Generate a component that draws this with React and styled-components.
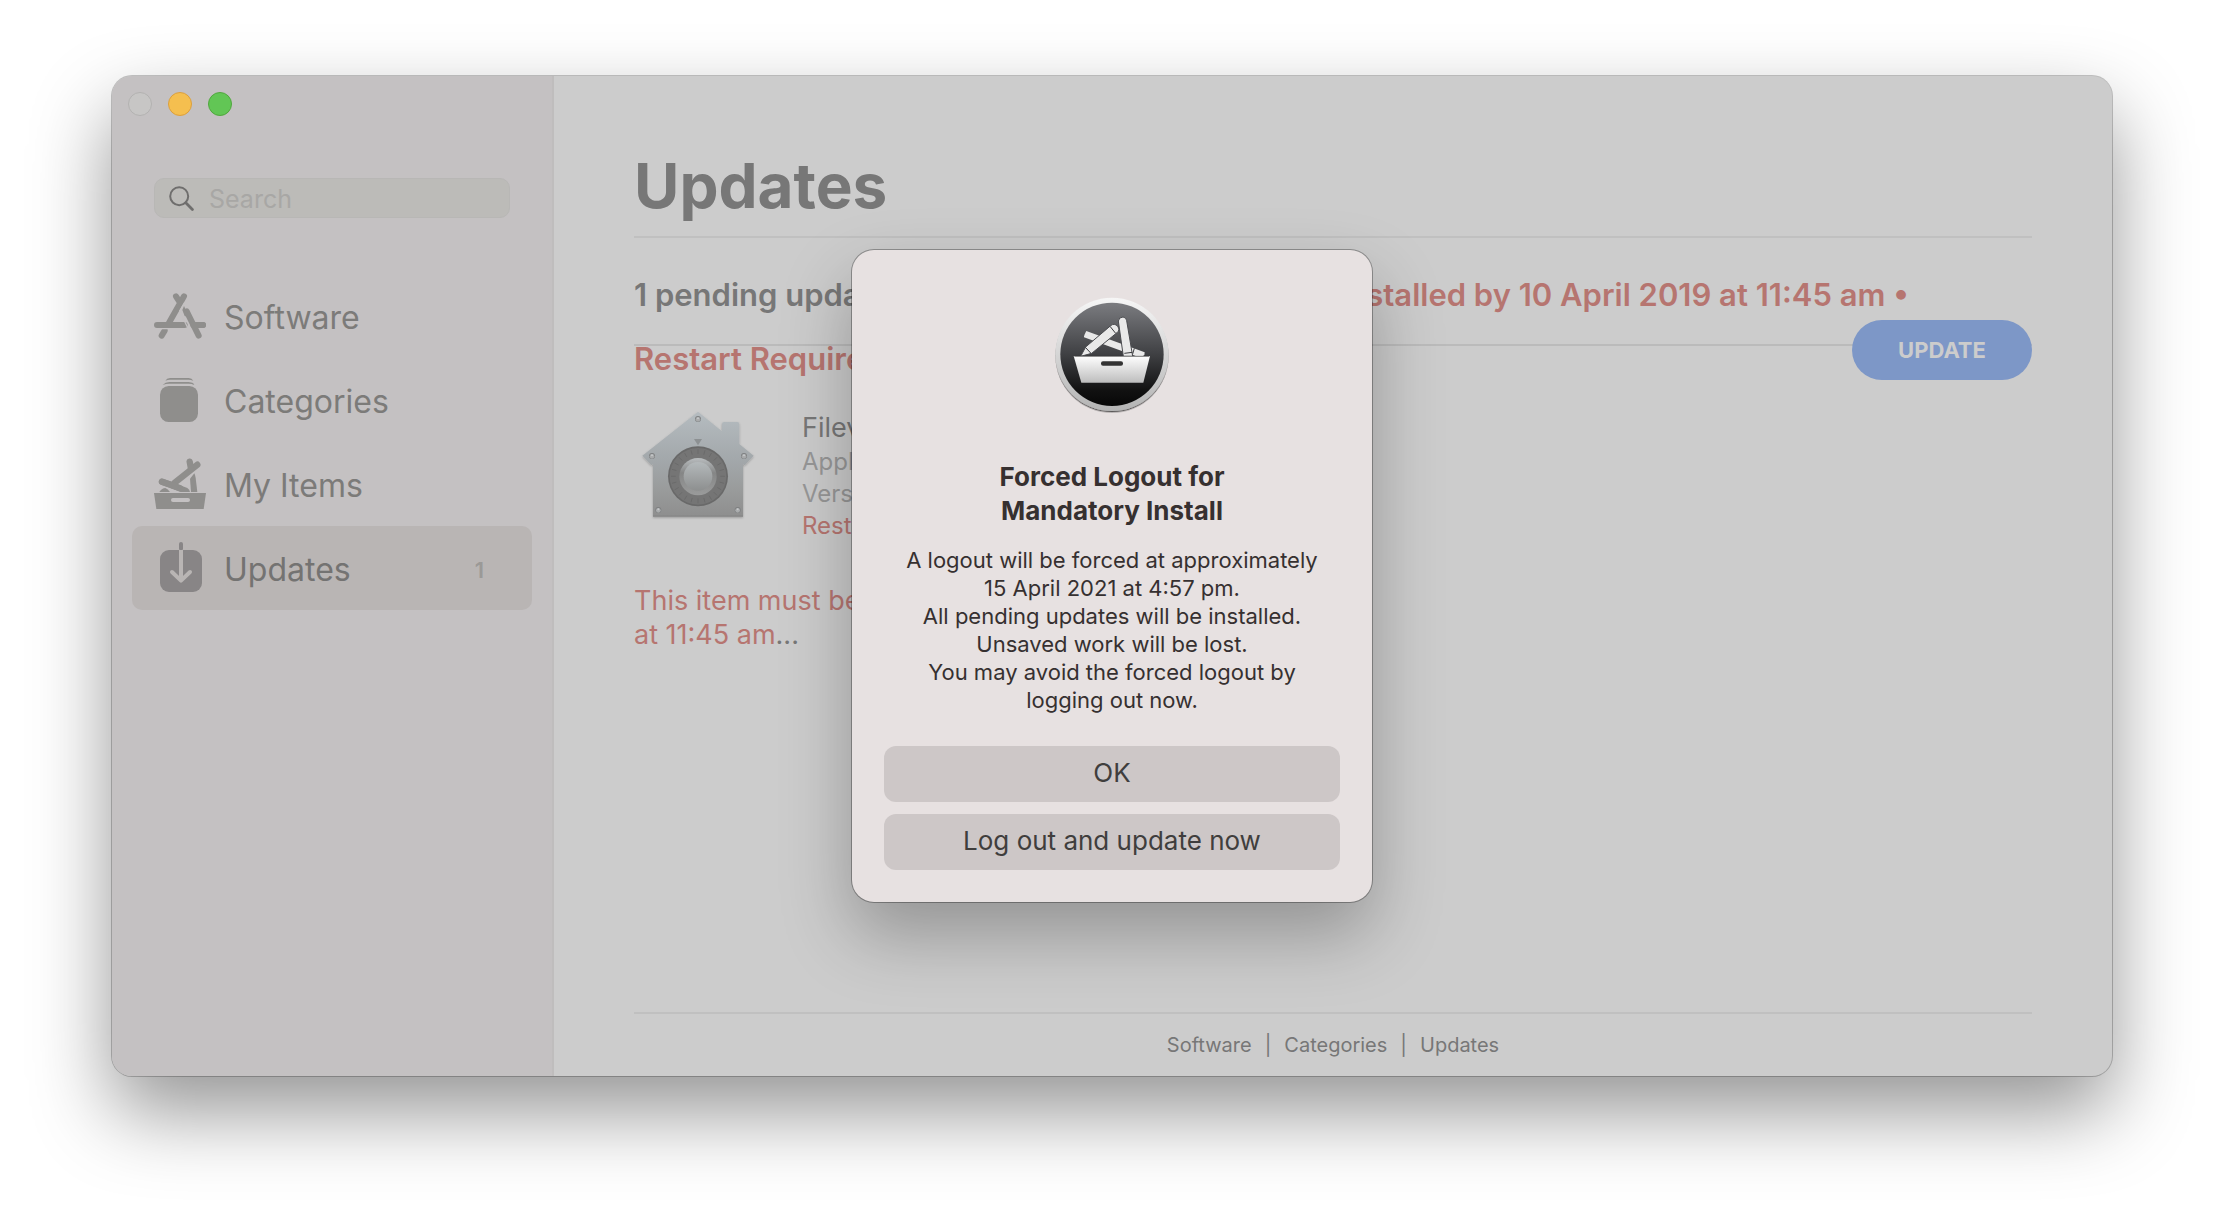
import React from "react";
import styled, { createGlobalStyle } from "styled-components";

const GlobalStyle = createGlobalStyle`
  *, *::before, *::after { box-sizing: border-box; }
  body {
    margin: 0;
    background: #fff;
    color: #777;
    font-family: Inter, "Liberation Sans", sans-serif;
  }
  h1, h2, h3, p, ul { margin: 0; padding: 0; }
  ul { list-style: none; }
  a { color: inherit; text-decoration: none; }
  button, input { font-family: inherit; }
`;

const Desktop = styled.div`
  min-height: 100vh;
  padding: 76px 112px 148px;
  display: flex;
`;

const AppWindow = styled.div`
  position: relative;
  flex: 1;
  display: flex;
  border-radius: 20px;
  background: #ccc;
  box-shadow: 0 0 0 1px rgba(0, 0, 0, 0.22), 0 36px 80px rgba(0, 0, 0, 0.42);
`;

const Sidebar = styled.aside`
  flex: none;
  width: 442px;
  padding: 16px 20px;
  border-right: 2px solid #bfbdbd;
  border-radius: 20px 0 0 20px;
  background: #c4c1c2;
`;

const Lights = styled.div`
  display: flex;
  gap: 16px;
  margin-left: -4px;
`;

const Light = styled.button`
  width: 24px;
  height: 24px;
  padding: 0;
  border: 1px solid ${(p) => p.$edge};
  border-radius: 50%;
  background: ${(p) => p.$fill};
`;

const SearchBox = styled.label`
  display: flex;
  align-items: center;
  gap: 15px;
  height: 40px;
  margin: 62px 22px 56px;
  padding: 0 14px;
  border: 1px solid #b8b7b5;
  border-radius: 10px;
  background: #bcbbb8;
`;

const SearchInput = styled.input`
  flex: 1;
  min-width: 0;
  padding: 2px 0 0;
  border: 0;
  outline: 0;
  background: none;
  color: #777;
  font-size: 25px;
  line-height: 32px;
  &::placeholder { color: #a8a7a5; opacity: 1; }
`;

const NavLink = styled.a`
  display: flex;
  align-items: center;
  gap: 18px;
  height: 84px;
  padding: 0 48px 0 22px;
  border-radius: 10px;
  background: ${(p) => (p.$active ? "#b9b5b4" : "transparent")};
  color: ${(p) => (p.$active ? "#747372" : "#7c7b79")};
  font-size: 32px;
  line-height: 40px;
`;

const NavLabel = styled.span`
  flex: 1;
  padding-top: 3px;
`;

const Count = styled.span`
  padding-top: 3px;
  color: #9b9997;
  font-size: 22px;
  font-weight: 600;
`;

const Main = styled.main`
  flex: 1;
  min-width: 0;
  display: flex;
  flex-direction: column;
  padding: 72px 80px 0;
`;

const PageTitle = styled.h1`
  padding-bottom: 12px;
  border-bottom: 2px solid #c0c0c0;
  font-size: 62px;
  font-weight: 700;
  line-height: 76px;
`;

const Banner = styled.section`
  position: relative;
  height: 108px;
  padding: 25px 80px 0 0;
  border-bottom: 2px solid #bbb;
`;

const BannerText = styled.h2`
  font-size: 31px;
  font-weight: 600;
  line-height: 64px;
`;

const Warning = styled.span`
  color: #b67570;
`;

const Unbroken = styled.span`
  white-space: nowrap;
`;

const UpdateButton = styled.button`
  position: absolute;
  top: 82px;
  right: 0;
  width: 180px;
  height: 60px;
  border: 0;
  border-radius: 30px;
  background: #7d97c7;
  color: #ccc;
  font-size: 22px;
  font-weight: 700;
`;

const Items = styled.ul`
  padding-top: 53px;
`;

const Item = styled.li`
  max-width: 640px;
`;

const ItemHead = styled.div`
  display: flex;
  gap: 40px;
`;

const ItemFacts = styled.div`
  padding-top: 11px;
  font-size: 24px;
  line-height: 32px;
  color: #979797;
`;

const ItemName = styled.h3`
  color: #777;
  font-size: 27px;
  font-weight: 400;
  line-height: 36px;
`;

const ItemNote = styled.p`
  margin-top: 42px;
  font-size: 27px;
  line-height: 34px;
`;

const Footer = styled.footer`
  display: flex;
  justify-content: center;
  gap: 13px;
  margin-top: auto;
  padding: 16px 0;
  border-top: 2px solid #c0c0c0;
  font-size: 20px;
  line-height: 30px;
`;

const Overlay = styled.div`
  position: absolute;
  inset: 0;
  display: grid;
  place-items: center;
`;

const Dialog = styled.div`
  width: 520px;
  padding: 45px 32px 32px;
  border-radius: 22px;
  background: #e7e1e1;
  color: #363030;
  text-align: center;
  box-shadow: 0 0 0 1px rgba(0, 0, 0, 0.3), 0 32px 70px rgba(0, 0, 0, 0.28);
`;

const DialogTitle = styled.h2`
  margin: 45px 0 18px;
  font-size: 26px;
  font-weight: 700;
  line-height: 34px;
`;

const DialogBody = styled.div`
  padding: 0 14px;
  font-size: 22px;
  line-height: 28px;
`;

const DialogActions = styled.div`
  display: grid;
  gap: 12px;
  margin-top: 32px;
`;

const DialogButton = styled.button`
  height: 56px;
  padding: 0 0 3px;
  border: 0;
  border-radius: 12px;
  background: #cdc7c7;
  color: #403e3d;
  font-size: 26px;
`;

const Block = styled.svg`
  display: block;
  flex: none;
  margin: ${(p) => (p.$centered ? "0 auto" : "0")};
`;

const SearchIcon = () => (
  <Block width="25" height="25" viewBox="0 0 25 25" fill="none" stroke="#6f6e6d" aria-hidden="true">
    <circle cx="10.2" cy="10.2" r="9" strokeWidth="2" />
    <path d="M16.8 16.8 L23.4 23.4" strokeWidth="2.8" strokeLinecap="round" />
  </Block>
);

const SoftwareIcon = () => (
  <Block width="52" height="52" viewBox="42 30 156 156" fill="none" stroke="#8f8e8c" strokeWidth="18" strokeLinecap="round" aria-hidden="true">
    <path d="M51 135H134M160 135H189M108 49L120 68M132 49L87 128" />
    <path d="M74 152L65 167" />
    <path d="M56 149L64 146H84" stroke="#c4c1c2" strokeWidth="4" />
    <path d="M133 84L175 166" stroke="#c4c1c2" strokeWidth="24" strokeLinecap="butt" />
    <path d="M140 94L176 167" />
    <path d="M160 135H189" />
    <path d="M132 78L127 90L134 108L148 112Z" fill="#8f8e8c" stroke="none" />
    <path d="M133 69L119 93L142 141" stroke="#c4c1c2" strokeWidth="4" />
  </Block>
);

const CategoriesIcon = () => (
  <Block width="52" height="52" viewBox="42 282 156 156" fill="#8f8e8c" aria-hidden="true">
    <rect x="60" y="318" width="114" height="108" rx="26" />
    <path d="M68 315Q76 306 88 306H146Q158 306 166 315Q156 311 146 311H88Q78 311 68 315Z" />
    <path d="M76 302Q80 294 90 294H146Q156 294 160 302Q152 299 146 299H90Q84 299 76 302Z" />
  </Block>
);

const MyItemsIcon = () => (
  <Block width="52" height="52" viewBox="42 534 156 156" fill="#8f8e8c" aria-hidden="true">
    <path d="M42 639H198L191 687H49Z" />
    <rect x="93" y="654" width="57" height="12" rx="6" fill="#c4c1c2" />
    <path d="M58 636Q66 624 76 624Q82 626 90 636Z" />
    <path d="M150 596L163 580Q166 586 167 594L172 636H153Z" />
    <path d="M66 605L120 625" stroke="#8f8e8c" strokeWidth="19" strokeLinecap="round" />
    <path d="M110 612L142 624Q149 628 150 636H122L92 624Z" />
    <path d="M172 554L112 602" stroke="#c4c1c2" strokeWidth="25" />
    <path d="M172 554L104 608" stroke="#8f8e8c" strokeWidth="19" strokeLinecap="round" />
    <path d="M149 545L153 566" stroke="#8f8e8c" strokeWidth="19" strokeLinecap="round" />
    <path d="M66 605L106 619" stroke="#8f8e8c" strokeWidth="19" strokeLinecap="round" />
  </Block>
);

const UpdatesIcon = () => (
  <Block width="52" height="52" viewBox="102 486 156 156" fill="none" strokeWidth="12" strokeLinecap="round" strokeLinejoin="round" aria-hidden="true">
    <rect x="120" y="510" width="126" height="126" rx="27" fill="#888586" />
    <path d="M183 492V506" stroke="#888586" />
    <path d="M183 510V600" stroke="#b9b5b4" strokeLinecap="butt" />
    <path d="M156 576L183 602L210 576" stroke="#b9b5b4" />
  </Block>
);

const RIVETS = [[234, 87], [96, 198], [372, 198], [115, 360], [353, 360]];
const TICKS = Array.from({ length: 24 }, (_, i) => i * 15);

const HouseIcon = () => (
  <Block width="128" height="128" viewBox="42 27 384 384" aria-hidden="true">
    <defs>
      <linearGradient id="wall" x1="0" y1="0" x2="0" y2="1">
        <stop offset="0" stopColor="#b5bcc0" />
        <stop offset="0.45" stopColor="#a3a8ab" />
        <stop offset="0.75" stopColor="#999b9b" />
        <stop offset="1" stopColor="#8e8e8e" />
      </linearGradient>
      <linearGradient id="knob" x1="0" y1="0" x2="0" y2="1">
        <stop offset="0" stopColor="#b4b9bb" />
        <stop offset="1" stopColor="#8d8f8f" />
      </linearGradient>
      <linearGradient id="rim" x1="0" y1="0" x2="0" y2="1">
        <stop offset="0" stopColor="#b9bdbf" />
        <stop offset="0.4" stopColor="#858686" />
        <stop offset="1" stopColor="#9a9b9b" />
      </linearGradient>
      <filter id="drop" x="-10%" y="-10%" width="120%" height="120%">
        <feDropShadow dx="0" dy="3" stdDeviation="3" floodColor="#000" floodOpacity="0.25" />
      </filter>
    </defs>
    <path d="M234 65L306 124V102Q306 96 312 96H352Q358 96 358 102V162L401 197L374 226L369 223V380H99V223L94 226L67 197Z" fill="url(#wall)" filter="url(#drop)" />
    <path d="M99 378H369" stroke="#858585" strokeWidth="3" />
    <path d="M222 147H246L234 166Z" fill="#8c9092" />
    <circle cx="234" cy="259" r="90" fill="#696969" />
    <circle cx="234" cy="259" r="85" fill="#757575" />
    {TICKS.map((a) => (
      <path key={a} d="M234 178V192" stroke="#666" strokeWidth="2" transform={`rotate(${a} 234 259)`} />
    ))}
    <circle cx="234" cy="260" r="56" fill="url(#rim)" />
    <circle cx="234" cy="259" r="43" fill="url(#knob)" />
    {RIVETS.map(([x, y]) => (
      <g key={`${x}-${y}`}>
        <circle cx={x} cy={y} r="9" fill="#7d7f80" />
        <circle cx={x} cy={y + 1} r="7" fill="#a9abac" />
        <circle cx={x} cy={y - 2} r="3" fill="#c6c8c9" />
      </g>
    ))}
  </Block>
);

const CenterIcon = () => (
  <Block $centered width="120" height="120" viewBox="67 44 360 360" aria-hidden="true">
    <defs>
      <linearGradient id="ring" x1="0" y1="0" x2="0" y2="1">
        <stop offset="0" stopColor="#f6f6f6" />
        <stop offset="1" stopColor="#b4b4b4" />
      </linearGradient>
      <linearGradient id="disc" x1="0" y1="0" x2="0" y2="1">
        <stop offset="0" stopColor="#7b7c80" />
        <stop offset="0.5" stopColor="#3f4043" />
        <stop offset="0.85" stopColor="#111" />
        <stop offset="1" stopColor="#070707" />
      </linearGradient>
      <linearGradient id="tray" x1="0" y1="0" x2="0" y2="1">
        <stop offset="0" stopColor="#fff" />
        <stop offset="1" stopColor="#bdbdbd" />
      </linearGradient>
      <filter id="lift" x="-10%" y="-10%" width="120%" height="120%">
        <feDropShadow dx="0" dy="4" stdDeviation="2" floodColor="#000" floodOpacity="0.6" />
      </filter>
    </defs>
    <circle cx="247" cy="222" r="170" fill="url(#ring)" filter="url(#lift)" />
    <circle cx="247" cy="222" r="155" fill="url(#disc)" />
    <g fill="#e9e9e9">
      <path d="M170 152L345 216Q346 224 340 227H318L163 171Q162 167 170 152Z" />
      <path d="M314 204L308 224" stroke="#3a3b3e" strokeWidth="3" />
      <path d="M153 228L168 200L243 136Q254 127 264 138Q272 149 262 157L186 219Z" stroke="#4b4c50" strokeWidth="3" />
      <path d="M168 202L184 219M241 138L258 159" stroke="#3a3b3e" strokeWidth="3" />
      <path d="M266 122Q268 110 280 110Q290 111 291 121L309 228H281Z" stroke="#4b4c50" strokeWidth="3" />
      <path d="M284 219L308 216" stroke="#3a3b3e" strokeWidth="3" />
    </g>
    <path d="M132 227H361L341 307H155Z" fill="url(#tray)" />
    <path d="M134 228H359" stroke="#333" strokeWidth="2" />
    <rect x="214" y="243" width="66" height="13" rx="6" fill="#333" />
  </Block>
);

const NAV = [
  { label: "Software", Icon: SoftwareIcon },
  { label: "Categories", Icon: CategoriesIcon },
  { label: "My Items", Icon: MyItemsIcon },
  { label: "Updates", Icon: UpdatesIcon, count: 1 },
];

export default function App() {
  return (
    <>
      <GlobalStyle />
      <Desktop>
        <AppWindow>
          <Sidebar>
            <Lights>
              <Light $fill="#c7c6c5" $edge="#b3b2b1" aria-label="Close" disabled />
              <Light $fill="#f5bf4f" $edge="#dc9f3d" aria-label="Minimise" />
              <Light $fill="#62c655" $edge="#51a73e" aria-label="Zoom" />
            </Lights>
            <SearchBox>
              <SearchIcon />
              <SearchInput type="text" placeholder="Search" aria-label="Search" />
            </SearchBox>
            <nav>
              {NAV.map(({ label, Icon, count }) => (
                <NavLink key={label} href="#" $active={Boolean(count)}>
                  <Icon />
                  <NavLabel>{label}</NavLabel>
                  {count && <Count>{count}</Count>}
                </NavLink>
              ))}
            </nav>
          </Sidebar>
          <Main>
            <PageTitle>Updates</PageTitle>
            <Banner>
              <BannerText>
                1 pending update{" "}
                <Warning>
                  &nbsp;• One or more items must be installed by 10 April 2019 at 11:45 am •{" "}
                  <Unbroken>Restart Required</Unbroken>
                </Warning>
              </BannerText>
              <UpdateButton>UPDATE</UpdateButton>
            </Banner>
            <Items>
              <Item>
                <ItemHead>
                  <HouseIcon />
                  <ItemFacts>
                    <ItemName>Filevault</ItemName>
                    <p>Apple</p>
                    <p>Version 1.0</p>
                    <p><Warning>Restart Required</Warning></p>
                  </ItemFacts>
                </ItemHead>
                <ItemNote>
                  <Warning>
                    This item must be installed by 10 April 2019 <Unbroken>at 11:45 am</Unbroken>
                  </Warning>
                  ...
                </ItemNote>
              </Item>
            </Items>
            <Footer>
              <a href="#">Software</a>
              <span>|</span>
              <a href="#">Categories</a>
              <span>|</span>
              <a href="#">Updates</a>
            </Footer>
          </Main>
          <Overlay>
            <Dialog role="alertdialog" aria-labelledby="dialog-title" aria-describedby="dialog-body">
              <CenterIcon />
              <DialogTitle id="dialog-title">
                Forced Logout for
                <br />
                Mandatory Install
              </DialogTitle>
              <DialogBody id="dialog-body">
                <p>A logout will be forced at approximately 15 April 2021 at 4:57 pm.</p>
                <p>All pending updates will be installed.</p>
                <p>Unsaved work will be lost.</p>
                <p>You may avoid the forced logout by logging out now.</p>
              </DialogBody>
              <DialogActions>
                <DialogButton>OK</DialogButton>
                <DialogButton>Log out and update now</DialogButton>
              </DialogActions>
            </Dialog>
          </Overlay>
        </AppWindow>
      </Desktop>
    </>
  );
}
